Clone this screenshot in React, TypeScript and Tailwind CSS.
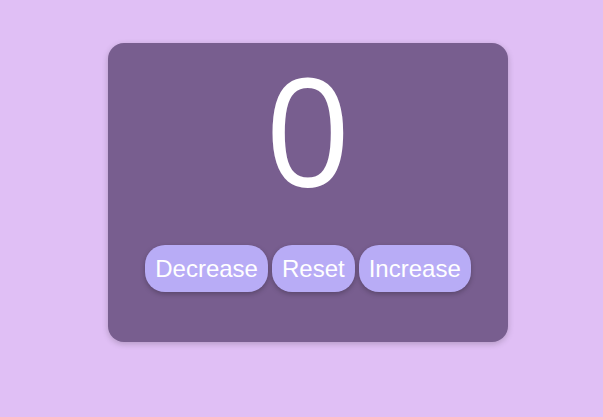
const App = () => {
  return (
    <div className="min-h-screen w-full bg-[#e0bff5] pt-[43px] pl-[108px]">
      <div className="w-[400px] h-[299px] rounded-[16px] bg-[#785e8f] shadow-[0_2px_6px_rgba(0,0,0,0.2)] flex flex-col items-center pt-[11px]">
        <div
          className="h-[150px] text-[150px] leading-[150px] text-white"
          style={{ fontFamily: '"Open Sans", sans-serif' }}
        >
          0
        </div>
        <div
          className="mt-[41px] flex gap-[4px]"
          style={{ fontFamily: '"Liberation Sans", Arial, sans-serif' }}
        >
          <button className="h-[47px] px-[10px] rounded-[20px] bg-[#b8acf6] text-white text-[24px] shadow-[0_2px_5px_rgba(0,0,0,0.25)]">
            Decrease
          </button>
          <button className="h-[47px] px-[10px] rounded-[20px] bg-[#b8acf6] text-white text-[24px] shadow-[0_2px_5px_rgba(0,0,0,0.25)]">
            Reset
          </button>
          <button className="h-[47px] px-[10px] rounded-[20px] bg-[#b8acf6] text-white text-[24px] shadow-[0_2px_5px_rgba(0,0,0,0.25)]">
            Increase
          </button>
        </div>
      </div>
    </div>
  );
};

export default App;
